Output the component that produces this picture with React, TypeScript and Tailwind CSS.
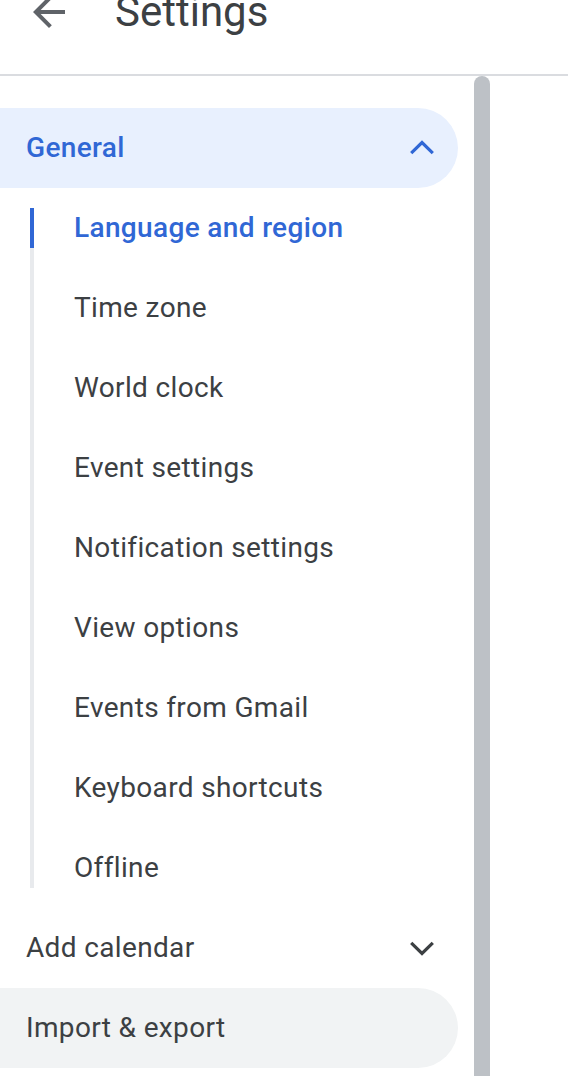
const font = { fontFamily: 'Roboto, "Noto Sans", Arial, sans-serif' };

function ExpandLess({ className = '' }: { className?: string }) {
  return (
    <svg viewBox="0 0 24 24" className={className} fill="none" stroke="currentColor" strokeWidth={1.6}>
      <path d="M6.6 14.6L12 9.3l5.4 5.3" />
    </svg>
  );
}

function ExpandMore({ className = '' }: { className?: string }) {
  return (
    <svg viewBox="0 0 24 24" className={className} fill="none" stroke="currentColor" strokeWidth={1.6}>
      <path d="M6.6 9.4L12 14.7l5.4-5.3" />
    </svg>
  );
}

function ArrowBack({ className = '' }: { className?: string }) {
  return (
    <svg viewBox="0 0 24 24" className={className} fill="currentColor">
      <path d="M20 11H7.83l5.59-5.59L12 4l-8 8 8 8 1.41-1.41L7.83 13H20v-2z" />
    </svg>
  );
}

const subItems = [
  'Language and region',
  'Time zone',
  'World clock',
  'Event settings',
  'Notification settings',
  'View options',
  'Events from Gmail',
  'Keyboard shortcuts',
  'Offline',
];

export default function App() {
  return (
    <div className="w-[568px] h-[1076px] overflow-hidden bg-white text-[#3c4043]" style={font}>
      {/* Header */}
      <div className="h-[76px] flex items-start border-b-2 border-[#dadce0]">
        <div className="flex items-center h-[48px] -mt-[12px]">
          <div className="w-[48px] h-[48px] ml-[25px] text-[#5f6368]">
            <ArrowBack className="w-[48px] h-[48px]" />
          </div>
          <span className="ml-[42px] text-[42px] leading-none">Settings</span>
        </div>
      </div>

      <div className="flex">
        {/* Nav */}
        <div className="w-[458px] pt-[32px] tracking-[0.35px]">
          <div className="h-[80px] flex items-center justify-between pl-[26px] pr-[12px] bg-[#e8f0fe] rounded-r-full text-[#3067d5]">
            <span className="text-[28px] font-medium">General</span>
            <ExpandLess className="w-[48px] h-[48px]" />
          </div>

          <div className="ml-[30px] my-[20px] flex flex-col border-l-4 border-[#e8eaed]">
            {subItems.map((label, i) => (
              <div
                key={label}
                className={`relative h-[80px] shrink-0 flex items-center pl-[40px] text-[28px] ${
                  i === 0 ? '-mt-[20px] font-medium text-[#3067d5]' : ''
                } ${i === subItems.length - 1 ? '-mb-[20px]' : ''}`}
              >
                {i === 0 && <span className="absolute -left-[4px] top-[20px] h-[40px] w-[4px] bg-[#3067d5]" />}
                {label}
              </div>
            ))}
          </div>

          <div className="h-[80px] flex items-center justify-between pl-[26px] pr-[12px] text-[28px]">
            <span>Add calendar</span>
            <ExpandMore className="w-[48px] h-[48px]" />
          </div>
          <div className="h-[80px] flex items-center pl-[26px] bg-[#f1f3f4] rounded-r-full text-[28px]">
            Import &amp; export
          </div>
        </div>

        {/* Scrollbar */}
        <div className="ml-[16px] w-[16px] h-[1000px] bg-[#bdc1c6] rounded-t-full" />
      </div>
    </div>
  );
}
